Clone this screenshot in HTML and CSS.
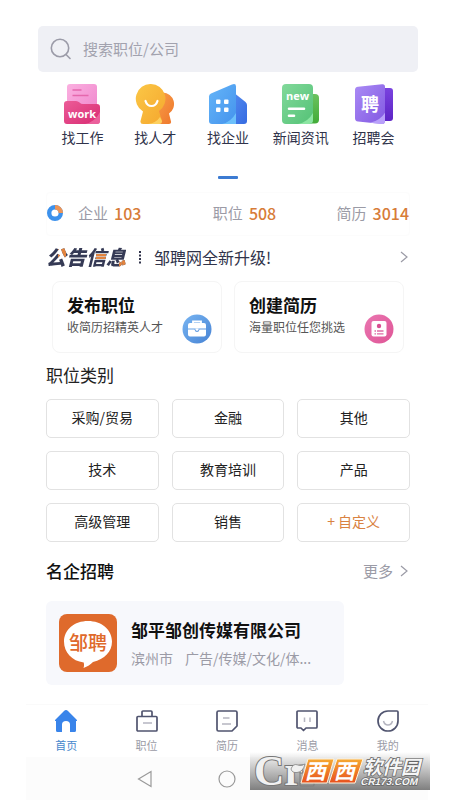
FILE: index.html
```html
<!DOCTYPE html>
<html lang="zh-CN">
<head>
<meta charset="utf-8">
<meta name="viewport" content="width=device-width, initial-scale=1">
<title>邹聘网</title>
<link rel="stylesheet" href="styles.css">
</head>
<body>
<main class="page">
  <form class="search" role="search">
    <svg class="search-icon" viewBox="0 0 22 22" aria-hidden="true"><circle cx="10" cy="10" r="8.700"/><path d="M16 16.500l4 4"/></svg>
    <input class="search-input" type="search" aria-label="搜索职位/公司" placeholder="搜索职位/公司">
  </form>

  <nav class="shortcuts" aria-label="快捷入口">
    <a class="shortcut" href="#jobs">
      <svg class="shortcut-icon" viewBox="0 0 40 40" aria-hidden="true">
        <defs>
          <linearGradient id="pinkPaper" x1="0" y1="0" x2="1" y2="1"><stop offset="0" stop-color="#fbb0e0"/><stop offset="1" stop-color="#ee83cb"/></linearGradient>
          <linearGradient id="pinkFolder" x1="0" y1="0" x2="1" y2="1"><stop offset="0" stop-color="#ec5c98"/><stop offset="1" stop-color="#d82b72"/></linearGradient>
        </defs>
        <rect x="5" y="0" width="30" height="36" rx="3" fill="url(#pinkPaper)"/>
        <path d="M10.500 6h9M10.500 11.500h16" stroke="#e567ad" stroke-width="1.600"/>
        <path d="M2 20q0-3 3-3h9q2 0 3.500 1.500T21 20h14q3 0 3 3v14q0 3-3 3H5q-3 0-3-3z" fill="url(#pinkFolder)"/>
        <path d="M38 28v9q0 3-3 3H23q10-2 15-12z" fill="#f57bb0" opacity=".65"/>
        <text class="icon-word" x="20" y="34" text-anchor="middle">work</text>
      </svg>
      <span class="shortcut-label">找工作</span>
    </a>
    <a class="shortcut" href="#talent">
      <svg class="shortcut-icon" viewBox="0 0 40 40" aria-hidden="true">
        <defs>
          <linearGradient id="gold" x1="0" y1="0" x2="1" y2="1"><stop offset="0" stop-color="#fbc746"/><stop offset="1" stop-color="#f5a72e"/></linearGradient>
          <linearGradient id="orange" x1="0" y1="0" x2="1" y2="1"><stop offset="0" stop-color="#f9a04a"/><stop offset="1" stop-color="#ee762b"/></linearGradient>
        </defs>
        <path d="M28 8.500a11.500 11.500 0 0 1 6 21l2 8q.5 2.500-2 2.500H20V10z" fill="url(#orange)"/>
        <path d="M16 0a14.800 14.800 0 0 1 8 27q1.500 6 3 9.500 0 3.500-3 3.500H8q-3 0-2.500-3L8 27.500A14.800 14.800 0 0 1 16 0z" fill="url(#gold)"/>
        <path d="M13 40q8-1 12-7l2 4q0 3-3 3z" fill="#ffd96c" opacity=".8"/>
        <path d="M10.500 17q1.500 5 6 5t6-5" fill="none" stroke="#fff" stroke-width="2.200" stroke-linecap="round"/>
      </svg>
      <span class="shortcut-label">找人才</span>
    </a>
    <a class="shortcut" href="#companies">
      <svg class="shortcut-icon" viewBox="0 0 40 40" aria-hidden="true">
        <defs>
          <linearGradient id="sky" x1="0" y1="0" x2="1" y2="1"><stop offset="0" stop-color="#65b5f8"/><stop offset="1" stop-color="#4493ed"/></linearGradient>
          <linearGradient id="blueSide" x1="0" y1="0" x2="1" y2="1"><stop offset="0" stop-color="#568ef1"/><stop offset="1" stop-color="#356be1"/></linearGradient>
        </defs>
        <path d="M25 8l12.500 10q1.500 1.500 1.500 3v16q0 3-3 3H22z" fill="url(#blueSide)"/>
        <path d="M1 12.500q0-2 2-3L24 .5q4-1.500 4 2V40H4q-3 0-3-3z" fill="url(#sky)"/>
        <path d="M14 40q9-2 14-11v11z" fill="#76cafe" opacity=".8"/>
        <g fill="#fff"><rect x="8" y="15.500" width="4.500" height="4.500" rx="1"/><rect x="16" y="15.500" width="4.500" height="4.500" rx="1"/><rect x="8" y="23.500" width="4.500" height="4.500" rx="1"/><rect x="16" y="23.500" width="4.500" height="4.500" rx="1"/></g>
      </svg>
      <span class="shortcut-label">找企业</span>
    </a>
    <a class="shortcut" href="#news">
      <svg class="shortcut-icon" viewBox="0 0 40 40" aria-hidden="true">
        <defs>
          <linearGradient id="mint" x1="0" y1="0" x2="1" y2="1"><stop offset="0" stop-color="#82d99b"/><stop offset="1" stop-color="#54c276"/></linearGradient>
          <linearGradient id="leaf" x1="0" y1="0" x2="0" y2="1"><stop offset="0" stop-color="#6bc260"/><stop offset="1" stop-color="#42ab38"/></linearGradient>
        </defs>
        <rect x="20" y="10" width="18" height="29.500" rx="4" fill="url(#leaf)"/>
        <rect x="1" y="0" width="31" height="40" rx="4" fill="url(#mint)"/>
        <path d="M17 40q10-2 15-11v7q0 4-4 4z" fill="#9df0b0" opacity=".75"/>
        <path d="M8 24.800h15M8 31.800h5" stroke="#fff" stroke-width="2.600" stroke-linecap="round"/>
        <text class="icon-word" x="16.500" y="16" text-anchor="middle">new</text>
      </svg>
      <span class="shortcut-label">新闻资讯</span>
    </a>
    <a class="shortcut" href="#fair">
      <svg class="shortcut-icon" viewBox="0 0 40 40" aria-hidden="true">
        <defs>
          <linearGradient id="lilac" x1="0" y1="0" x2="1" y2="1"><stop offset="0" stop-color="#aa8bf5"/><stop offset="1" stop-color="#8258e2"/></linearGradient>
          <linearGradient id="violet" x1="0" y1="0" x2="0" y2="1"><stop offset="0" stop-color="#7a43df"/><stop offset="1" stop-color="#5d24c5"/></linearGradient>
        </defs>
        <rect x="20" y="4" width="19" height="33" rx="3" fill="url(#violet)"/>
        <path d="M1 6q0-3 3-3.300L28 .2q3-.4 3 2.800v34q0 3.400-3 3L4 37.500q-3-.3-3-3.300z" fill="url(#lilac)"/>
        <path d="M16 38.800q10-2 15-10V37q0 3.400-3 3z" fill="#c4b0ff" opacity=".8"/>
        <text class="icon-hire" x="16" y="27" text-anchor="middle">聘</text>
      </svg>
      <span class="shortcut-label">招聘会</span>
    </a>
  </nav>
  <div class="pager" aria-hidden="true"></div>

  <section class="stats" aria-label="统计">
    <svg class="stats-icon" viewBox="0 0 16 16" aria-hidden="true"><circle cx="8" cy="8" r="5.800" fill="none" stroke="#3c91ec" stroke-width="4.400"/><path d="M8 2.200A5.800 5.800 0 0 1 13.800 8" fill="none" stroke="#ee9455" stroke-width="4.400"/></svg>
    <p class="stat">企业<strong>103</strong></p>
    <p class="stat">职位<strong>508</strong></p>
    <p class="stat">简历<strong>3014</strong></p>
  </section>

  <a class="notice" href="#notice">
    <span class="notice-brand">公告信息</span>
    <svg class="notice-dots" viewBox="0 0 4 14" aria-hidden="true"><path d="M1 1h2v2H1zM1 4.500h2v2H1zM1 8h2v2H1zM1 11.500h2v2H1z"/></svg>
    <span class="notice-text">邹聘网全新升级!</span>
    <svg class="chevron" viewBox="0 0 8 12" aria-hidden="true"><path d="M1 1l6 5-6 5"/></svg>
  </a>

  <section class="actions">
    <a class="action" href="#publish">
      <h2 class="action-title">发布职位</h2>
      <span class="action-text">收简历招精英人才</span>
      <svg class="action-icon" viewBox="0 0 30 30" aria-hidden="true">
        <defs><linearGradient id="caseBlue" x1="0" y1="0" x2="1" y2="1"><stop offset="0" stop-color="#78b5f2"/><stop offset="1" stop-color="#4783d4"/></linearGradient></defs>
        <circle cx="15" cy="15" r="14.500" fill="url(#caseBlue)"/>
        <path d="M11 9.500V7.500h8v2" fill="none" stroke="#fff" stroke-width="1.800"/>
        <path d="M8 9h14q2 0 2 2v3.500H6V11q0-2 2-2zM6 15.500h6.500q.5 2.500 2.500 2.500t2.500-2.500H24v5q0 2-2 2H8q-2 0-2-2z" fill="#fff"/>
        <path d="M13.500 14.500h3v1.500l-1.500 1-1.500-1z" fill="#fff"/>
      </svg>
    </a>
    <a class="action" href="#resume">
      <h2 class="action-title">创建简历</h2>
      <span class="action-text">海量职位任您挑选</span>
      <svg class="action-icon" viewBox="0 0 30 30" aria-hidden="true">
        <defs><linearGradient id="cardPink" x1="0" y1="0" x2="1" y2="1"><stop offset="0" stop-color="#ea76b1"/><stop offset="1" stop-color="#df5596"/></linearGradient></defs>
        <circle cx="15" cy="15" r="14.500" fill="url(#cardPink)"/>
        <rect x="7.500" y="7" width="15" height="15.500" rx="2" fill="#fff"/>
        <circle cx="15" cy="12" r="2.200" fill="#d84f91"/>
        <path d="M10.500 17h1.500M13 17h6.500M10.500 19.800h1.500M13 19.800h6.500" stroke="#df6ba5" stroke-width="1.300"/>
      </svg>
    </a>
  </section>

  <h2 class="section-title">职位类别</h2>
  <div class="categories">
    <button class="category" type="button">采购/贸易</button>
    <button class="category" type="button">金融</button>
    <button class="category" type="button">其他</button>
    <button class="category" type="button">技术</button>
    <button class="category" type="button">教育培训</button>
    <button class="category" type="button">产品</button>
    <button class="category" type="button">高级管理</button>
    <button class="category" type="button">销售</button>
    <button class="category category-custom" type="button">+ 自定义</button>
  </div>

  <div class="section-head">
    <h2 class="section-title section-title-strong">名企招聘</h2>
    <a class="more" href="#more">更多
      <svg class="chevron" viewBox="0 0 8 12" aria-hidden="true"><path d="M1 1l6 5-6 5"/></svg>
    </a>
  </div>

  <a class="company" href="#company">
    <svg class="company-logo" viewBox="0 0 58 58" aria-hidden="true">
      <rect width="58" height="58" rx="8" fill="#df6a2c"/>
      <path d="M29 7c13.500 0 24 8.500 24 20.500 0 10.500-7.500 17.500-19 20.500-2.500 2.500-5.500 4.500-9.500 6 .8-2 .6-4 .2-5.500C13 47 5 38.500 5 27.500 5 15.500 15.500 7 29 7z" fill="#fff"/>
      <text class="logo-text" x="29" y="36" text-anchor="middle">邹聘</text>
    </svg>
    <span class="company-info">
      <strong class="company-name">邹平邹创传媒有限公司</strong>
      <span class="company-meta"><span>滨州市</span><span>广告/传媒/文化/体...</span></span>
    </span>
  </a>
</main>

<footer class="footer">
  <nav class="tabs" aria-label="主导航">
    <a class="tab tab-active" href="#home">
      <svg class="tab-icon" viewBox="0 0 24 24" aria-hidden="true"><path d="M12 1Q13 1 14 2l8.500 8.500q.7.700.5 1.500h-1v9.500q0 1.500-1.500 1.500H16v-7.500q0-3.500-4-3.500t-4 3.500V23H3.500Q2 23 2 21.500V12H1q-.2-.8.500-1.500L10 2q1-1 2-1z" fill="#3984ea"/></svg>
      <span>首页</span>
    </a>
    <a class="tab" href="#positions">
      <svg class="tab-icon" viewBox="0 0 24 24" aria-hidden="true"><path class="tab-line" d="M3 7.500h18q1 0 1 1V21q0 1-1 1H3q-1 0-1-1V8.500q0-1 1-1zM7 7V3q0-1 1-1h8q1 0 1 1v4"/><path class="tab-detail" d="M8 14h9"/></svg>
      <span>职位</span>
    </a>
    <a class="tab" href="#resumes">
      <svg class="tab-icon" viewBox="0 0 24 24" aria-hidden="true"><path class="tab-line" d="M3.500 2h17Q22 2 22 3.500V17l-5 5H3.500Q2 22 2 20.500v-17Q2 2 3.500 2z"/><path class="tab-detail" d="M8 9h6.500M7 15h9"/></svg>
      <span>简历</span>
    </a>
    <a class="tab" href="#messages">
      <svg class="tab-icon" viewBox="0 0 24 24" aria-hidden="true"><path class="tab-line" d="M3 2h18q1 0 1 1v15q0 1-1 1H11l-2.500 2.500L6 19H3q-1 0-1-1V3q0-1 1-1z"/><path class="tab-detail" d="M9.500 8.500V13M15 8.500V13"/></svg>
      <span>消息</span>
    </a>
    <a class="tab" href="#me">
      <svg class="tab-icon" viewBox="0 0 24 24" aria-hidden="true"><path class="tab-line" d="M12 2h9q1 0 1 1v9A10 10 0 1 1 12 2z"/><path class="tab-detail" d="M7.500 12q1 4 4.500 4t4.500-4"/></svg>
      <span>我的</span>
    </a>
  </nav>
  <div class="system" aria-hidden="true">
    <svg class="system-icon" viewBox="0 0 20 20"><path d="M1.500 10L14 2.500v15z"/></svg>
    <svg class="system-icon" viewBox="0 0 20 20"><circle cx="10" cy="10" r="8"/></svg>
    <svg class="system-icon" viewBox="0 0 20 20"><rect x="3" y="3" width="14" height="14" rx="1"/></svg>
  </div>
  <div class="watermark">
    <svg class="watermark-art" viewBox="0 0 180 38" role="img" aria-label="Cr 西西软件园 CR173.COM">
      <defs>
        <linearGradient id="fire" x1="0" y1="0" x2="0" y2="1"><stop offset="0" stop-color="#f6a931"/><stop offset="1" stop-color="#e7501f"/></linearGradient>
      </defs>
      <text class="mark-logo" x="4" y="33">Cr</text>
      <path d="M41 17q2-6 7-4 3 1.500 7-1-2 8-8 8.500-5 .5-6-3.500z" fill="#f1f1f1" stroke="#777" stroke-width=".7"/>
      <path d="M58 7h26l-7 24H51zM87 7h26l-8 24H79z" fill="url(#fire)" stroke="#fff3dc" stroke-width="1"/>
      <g transform="skewX(-14)">
        <text class="mark-west" x="72" y="27" text-anchor="middle">西</text>
        <text class="mark-west" x="101" y="27" text-anchor="middle">西</text>
        <text class="mark-name" x="147" y="22" text-anchor="middle">软件园</text>
        <text class="mark-url" x="147" y="33" text-anchor="middle">CR173.COM</text>
      </g>
    </svg>
  </div>
</footer>
</body>
</html>
```
FILE: styles.css
```css
* {
  box-sizing: border-box;
}

body {
  margin: 0;
  min-height: 100vh;
  display: flex;
  flex-direction: column;
  justify-content: space-between;
  background: #fff;
  color: #222;
  font-family: "Noto Sans CJK SC", "Noto Sans", sans-serif;
  font-size: 14px;
  line-height: 20px;
}

h2,
p {
  margin: 0;
}

a {
  color: inherit;
  text-decoration: none;
}

svg {
  display: block;
  flex: none;
}

.page {
  padding: 26px 40px 0 46px;
}

.search {
  display: flex;
  align-items: center;
  gap: 11px;
  height: 46px;
  margin: 0 -8px;
  padding: 0 12px;
  border-radius: 5px;
  background: #eff0f5;
}

.search-icon {
  width: 22px;
  height: 22px;
  fill: none;
  stroke: #9b9ba8;
  stroke-width: 1.6;
  stroke-linecap: round;
}

.search-input {
  flex: 1;
  min-width: 0;
  padding: 0;
  border: 0;
  outline: 0;
  background: none;
  color: #333;
  font: inherit;
  font-size: 15px;
}

.search-input::placeholder {
  color: #a2a2ae;
  opacity: 1;
}

.shortcuts {
  display: grid;
  grid-template-columns: repeat(5, 1fr);
  margin-top: 12px;
}

.shortcut {
  display: flex;
  flex-direction: column;
  align-items: center;
  gap: 3px;
  color: #30334a;
  white-space: nowrap;
}

.shortcut-icon {
  width: 40px;
  height: 40px;
}

.icon-word {
  fill: #fff;
  font-family: "Open Sans", sans-serif;
  font-weight: 700;
  font-size: 11px;
}

.icon-hire {
  fill: #fff;
  font-size: 18px;
  font-weight: 700;
}

.pager {
  width: 20px;
  height: 3px;
  margin: 29px auto 0;
  border-radius: 1px;
  background: #3c7bd2;
}

.stats {
  display: grid;
  grid-template-columns: 31px 12fr 11fr auto;
  align-items: center;
  height: 44px;
  margin-top: 13px;
  padding-bottom: 2px;
  border: 1px solid #fcfcfc;
  border-radius: 4px;
}

.stats-icon {
  width: 16px;
  height: 16px;
}

.stat {
  display: flex;
  align-items: center;
  gap: 6px;
  color: #9b9ba6;
  font-size: 15px;
}

.stat strong {
  color: #d77c38;
  font-size: 16px;
  font-weight: 500;
}

.notice {
  display: flex;
  align-items: center;
  height: 42px;
  color: #30334a;
}

.notice-brand {
  font-size: 20px;
  font-style: italic;
  font-weight: 900;
  line-height: 24px;
  background:
    linear-gradient(#e3843e, #e3843e) 12px 2px / 8px 11px no-repeat,
    linear-gradient(#e3843e, #e3843e) 50px 9px / 10px 5px no-repeat,
    linear-gradient(#e3843e, #e3843e) 73px 15px / 7px 9px no-repeat,
    #353a55;
  background-clip: text;
  -webkit-text-fill-color: transparent;
}

.notice-dots {
  width: 4px;
  height: 14px;
  margin: 0 12px;
  fill: #30334a;
}

.notice-text {
  flex: 1;
  font-size: 16px;
}

.chevron {
  width: 8px;
  height: 12px;
  fill: none;
  stroke: #9b9ba6;
  stroke-width: 1.2;
}

.notice .chevron,
.more .chevron {
  margin-right: 2px;
}

.actions {
  display: grid;
  grid-template-columns: 1fr 1fr;
  gap: 12px;
  margin: 3px 6px 0;
}

.action {
  display: grid;
  grid-template-columns: 1fr 30px;
  grid-template-rows: 24px 20px;
  min-height: 72px;
  padding: 11px 9px 0 14px;
  border: 1px solid #f5f5f5;
  border-radius: 8px;
  white-space: nowrap;
}

.action-title {
  color: #111;
  font-size: 17px;
  font-weight: 700;
  line-height: 24px;
}

.action-text {
  grid-row: 2;
  color: #555;
  font-size: 12px;
}

.action-icon {
  grid-row: 2;
  grid-column: 2;
  width: 30px;
  height: 30px;
  margin-top: -3px;
}

.section-title {
  margin-top: 10px;
  font-size: 17px;
  font-weight: 400;
  line-height: 24px;
}

.section-title-strong {
  margin-top: 0;
  color: #111;
  font-weight: 500;
}

.categories {
  display: grid;
  grid-template-columns: repeat(3, 1fr);
  gap: 13px;
  margin-top: 12px;
}

.category {
  height: 39px;
  padding: 0 0 3px;
  border: 1px solid #e2e2e2;
  border-radius: 5px;
  background: #fff;
  color: #222;
  font: inherit;
}

.category-custom {
  color: #d98242;
}

.section-head {
  display: flex;
  align-items: center;
  justify-content: space-between;
  margin-top: 17px;
}

.more {
  display: flex;
  align-items: center;
  gap: 7px;
  color: #9b9ba6;
  font-size: 15px;
}

.company {
  display: flex;
  align-items: center;
  gap: 14px;
  width: 82%;
  min-height: 84px;
  margin-top: 18px;
  padding: 13px;
  border-radius: 6px;
  background: #f7f8fc;
  white-space: nowrap;
}

.company-logo {
  width: 58px;
  height: 58px;
}

.logo-text {
  fill: #df6a2c;
  font-size: 19px;
  font-weight: 500;
}

.company-info {
  display: flex;
  flex-direction: column;
  gap: 6px;
}

.company-name {
  color: #111;
  font-size: 17px;
  line-height: 24px;
}

.company-meta {
  display: flex;
  gap: 12px;
  color: #9b9ba6;
}

.footer {
  position: relative;
  padding: 0 22px 0 26px;
}

.tabs {
  display: grid;
  grid-template-columns: repeat(5, 1fr);
  border-top: 1px solid #fafafa;
  padding: 4px 0;
}

.tab {
  display: flex;
  flex-direction: column;
  align-items: center;
  gap: 4px;
  color: #9b9ba6;
  font-size: 11px;
  line-height: 16px;
}

.tab-active {
  color: #4586cc;
}

.tab-icon {
  width: 24px;
  height: 24px;
}

.tab-line,
.tab-detail {
  fill: none;
  stroke: #50546f;
  stroke-width: 1.7;
  stroke-linejoin: round;
}

.tab-detail {
  stroke: #b5b5c0;
  stroke-width: 1.5;
}

.system {
  display: grid;
  grid-template-columns: repeat(5, 1fr);
  justify-items: center;
  align-items: center;
  height: 43px;
  background: #fcfcfc;
}

.system-icon {
  width: 20px;
  height: 20px;
  fill: none;
  stroke: #999;
  stroke-width: 1.2;
}

.system-icon:first-child {
  grid-column: 2;
}

.watermark {
  position: absolute;
  right: 20px;
  bottom: 10px;
  background: linear-gradient(rgba(120, 120, 120, 0), rgba(120, 120, 120, 0.95));
}

.watermark-art {
  width: 180px;
  height: 38px;
  overflow: visible;
}

.mark-logo {
  fill: #f1f1f1;
  stroke: #777;
  stroke-width: 2;
  paint-order: stroke;
  font-family: "Liberation Serif", serif;
  font-size: 42px;
  font-weight: 700;
}

.mark-west {
  fill: #fff;
  font-size: 21px;
  font-weight: 700;
}

.mark-name {
  fill: #f6f6f6;
  stroke: #666;
  stroke-width: 1.5;
  paint-order: stroke;
  font-size: 19px;
  font-weight: 700;
}

.mark-url {
  fill: #f6f6f6;
  stroke: #666;
  stroke-width: 1.5;
  paint-order: stroke;
  font-family: "Liberation Sans", sans-serif;
  font-size: 10px;
  font-weight: 700;
}
```
